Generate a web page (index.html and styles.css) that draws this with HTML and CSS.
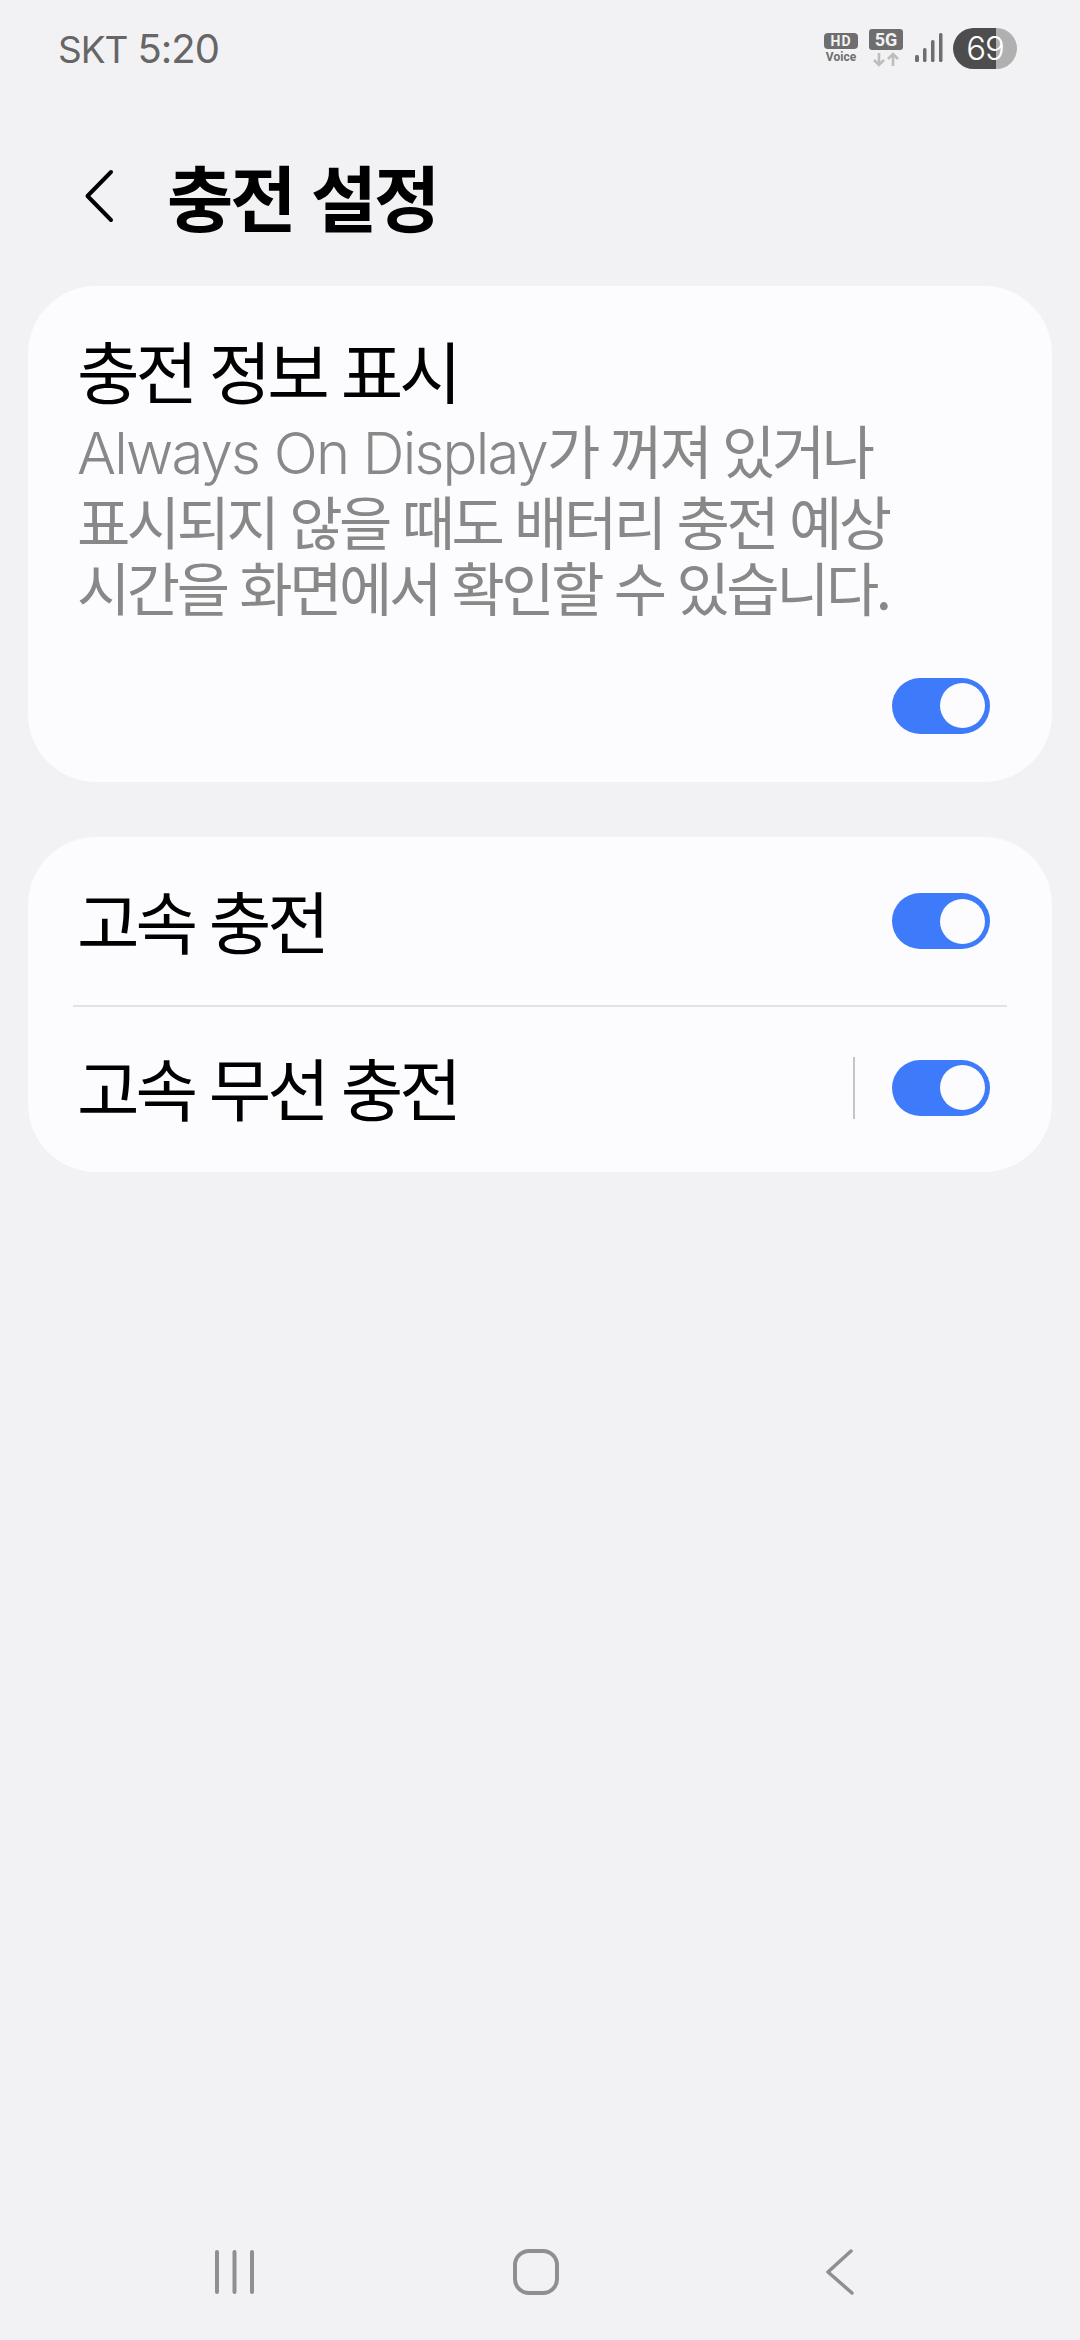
FILE: index.html
```html
<!DOCTYPE html>
<html lang="ko">
<head>
    <meta charset="UTF-8">
    <meta name="viewport" content="width=device-width, initial-scale=1.0">
    <title>충전 설정</title>
    <link rel="stylesheet" href="styles.css">
</head>
<body>
    <div class="page">
        <div class="status-bar">
            <div class="status-left">
                <span class="carrier">SKT</span>
                <span class="clock">5:20</span>
            </div>
            <div class="status-right">
                <div class="hd-voice">
                    <span class="hd-badge">HD</span>
                    <span class="voice">Voice</span>
                </div>
                <div class="net">
                    <span class="net-badge">5G</span>
                    <svg class="net-arrows" width="30" height="15" viewBox="0 0 30 15">
                        <path d="M8 1v12M3 8l5 5 5-5" fill="none" stroke="#bdbdbd" stroke-width="2.6"/>
                        <path d="M22 14V2M17 7l5-5 5 5" fill="none" stroke="#bdbdbd" stroke-width="2.6"/>
                    </svg>
                </div>
                <svg class="signal" width="28" height="30" viewBox="0 0 28 30">
                    <rect x="0" y="22" width="4" height="7" rx="1.5" fill="#6e6e6e"/>
                    <rect x="8" y="15" width="3.5" height="14" rx="1.5" fill="#6e6e6e"/>
                    <rect x="16" y="7" width="3.5" height="22" rx="1.5" fill="#6e6e6e"/>
                    <rect x="24" y="0" width="3.5" height="29" rx="1.5" fill="#6e6e6e"/>
                </svg>
                <div class="battery">
                    <span class="battery-level">69</span>
                </div>
            </div>
        </div>

        <div class="header">
            <svg class="back" width="30" height="54" viewBox="0 0 30 54">
                <path d="M27 3L3.500 27 27 51" fill="none" stroke="#000" stroke-width="4" stroke-linecap="round" stroke-linejoin="round"/>
            </svg>
            <h1>충전 설정</h1>
        </div>

        <div class="card card-info">
            <div class="item-title">충전 정보 표시</div>
            <div class="item-desc"><span class="latin">Always On Display</span>가 꺼져 있거나<br>표시되지 않을 때도 배터리 충전 예상<br>시간을 화면에서 확인할 수 있습니다.</div>
            <div class="toggle-row">
                <div class="toggle"><div class="knob"></div></div>
            </div>
        </div>

        <div class="card card-list">
            <div class="row">
                <div class="item-title">고속 충전</div>
                <div class="toggle"><div class="knob"></div></div>
            </div>
            <div class="row-line"></div>
            <div class="row row-last">
                <div class="item-title">고속 무선 충전</div>
                <div class="row-sep"></div>
                <div class="toggle"><div class="knob"></div></div>
            </div>
        </div>

        <div class="nav-bar">
            <svg width="40" height="46" viewBox="0 0 40 46">
                <path d="M3 3v40M20.500 3v40M38 3v40" fill="none" stroke="#8f8f8f" stroke-width="4" stroke-linecap="round"/>
            </svg>
            <svg class="nav-home" width="46" height="46" viewBox="0 0 46 46">
                <rect x="2" y="2" width="42" height="42" rx="14" fill="none" stroke="#8f8f8f" stroke-width="4"/>
            </svg>
            <svg class="nav-back" width="30" height="46" viewBox="0 0 30 46">
                <path d="M26 2L3 23 27 44" fill="none" stroke="#8f8f8f" stroke-width="3.500" stroke-linecap="round" stroke-linejoin="round"/>
            </svg>
        </div>
    </div>
</body>
</html>
```

FILE: styles.css
```css
body {
    margin: 0;
    background-color: #f2f2f4;
    font-family: "Noto Sans CJK KR", "Noto Sans", sans-serif;
}
.page {
    display: flex;
    flex-direction: column;
    height: 2340px;
    box-sizing: border-box;
}
.status-bar {
    display: flex;
    justify-content: space-between;
    align-items: center;
    height: 96px;
    padding: 0 63px 0 58px;
    color: #666;
}
.status-left {
    display: flex;
    align-items: baseline;
    gap: 10px;
    font-family: "Inter", sans-serif;
}
.carrier {
    font-size: 37px;
    letter-spacing: -1px;
}
.clock {
    font-size: 40px;
    letter-spacing: -1px;
}
.status-right {
    display: flex;
    align-items: center;
}
.hd-voice {
    display: flex;
    flex-direction: column;
    align-items: center;
    width: 36px;
    font-family: "Roboto", sans-serif;
    font-weight: 700;
    color: #6e6e6e;
}
.hd-badge {
    width: 34px;
    height: 16px;
    line-height: 16px;
    border-radius: 4px;
    background-color: #6e6e6e;
    color: #f2f2f4;
    font-size: 14px;
    letter-spacing: 1px;
    text-align: center;
}
.voice {
    font-size: 12px;
    line-height: 14px;
    margin-top: 1px;
}
.net {
    display: flex;
    flex-direction: column;
    align-items: center;
    margin-left: 10px;
}
.net-badge {
    width: 34px;
    height: 21px;
    line-height: 21px;
    border-radius: 3px;
    background-color: #6e6e6e;
    color: #f2f2f4;
    font-family: "Roboto", sans-serif;
    font-weight: 700;
    font-size: 18px;
    text-align: center;
}
.net-arrows {
    margin-top: 2px;
}
.signal {
    margin-left: 12px;
}
.battery {
    display: flex;
    justify-content: center;
    align-items: center;
    width: 64px;
    height: 41px;
    margin-left: 10px;
    border-radius: 21px;
    background: linear-gradient(to right, #4d4d4d 67%, #b0b0b0 67%);
}
.battery-level {
    font-family: "Inter", sans-serif;
    font-weight: 300;
    font-size: 33px;
    letter-spacing: -1px;
    color: #fff;
}
.header {
    display: flex;
    align-items: center;
    height: 190px;
    padding: 10px 0 0 84px;
    box-sizing: border-box;
}
.back {
    margin-right: 53px;
}
h1 {
    margin: -3px 0 0;
    font-size: 72px;
    font-weight: 700;
    letter-spacing: -3px;
    color: #000;
}
.card {
    margin: 0 28px;
    background-color: #fcfcfe;
    border-radius: 68px;
}
.card-info {
    height: 496px;
    padding: 0 49px;
    box-sizing: border-box;
}
.card-list {
    margin-top: 55px;
    height: 335px;
}
.item-title {
    font-size: 68px;
    line-height: 88px;
    letter-spacing: -4.1px;
    color: #000;
}
.card-info .item-title {
    padding-top: 40px;
}
.row .item-title {
    margin-top: -2px;
}
.item-desc {
    margin-top: 2px;
    font-size: 58px;
    line-height: 66.5px;
    letter-spacing: -3.5px;
    color: #888;
}
.latin {
    font-family: "Inter", sans-serif;
    font-weight: 300;
    letter-spacing: -1.8px;
}
.toggle-row {
    display: flex;
    justify-content: flex-end;
    margin-top: 58px;
    padding-right: 13px;
}
.toggle {
    position: relative;
    width: 98px;
    height: 56px;
    border-radius: 28px;
    background-color: #3e7bfb;
    flex-shrink: 0;
}
.knob {
    position: absolute;
    top: 5.500px;
    right: 5px;
    width: 45px;
    height: 45px;
    border-radius: 50%;
    background-color: #fcfcfe;
}
.row {
    display: flex;
    align-items: center;
    justify-content: space-between;
    height: 168px;
    padding: 0 62px 0 49px;
}
.row-last {
    height: 165px;
    padding-bottom: 4px;
    box-sizing: border-box;
}
.row-last .item-title {
    flex: 1;
}
.row-line {
    height: 2px;
    margin: 0 45px;
    background-color: #e2e2e4;
}
.row-sep {
    width: 2px;
    height: 62px;
    margin-right: 37px;
    background-color: #c4c4c4;
}
.nav-bar {
    display: flex;
    align-items: center;
    margin-top: auto;
    height: 46px;
    margin-bottom: 45px;
    padding-left: 214px;
}
.nav-home {
    margin-left: 259px;
}
.nav-back {
    margin-left: 266px;
}
```
